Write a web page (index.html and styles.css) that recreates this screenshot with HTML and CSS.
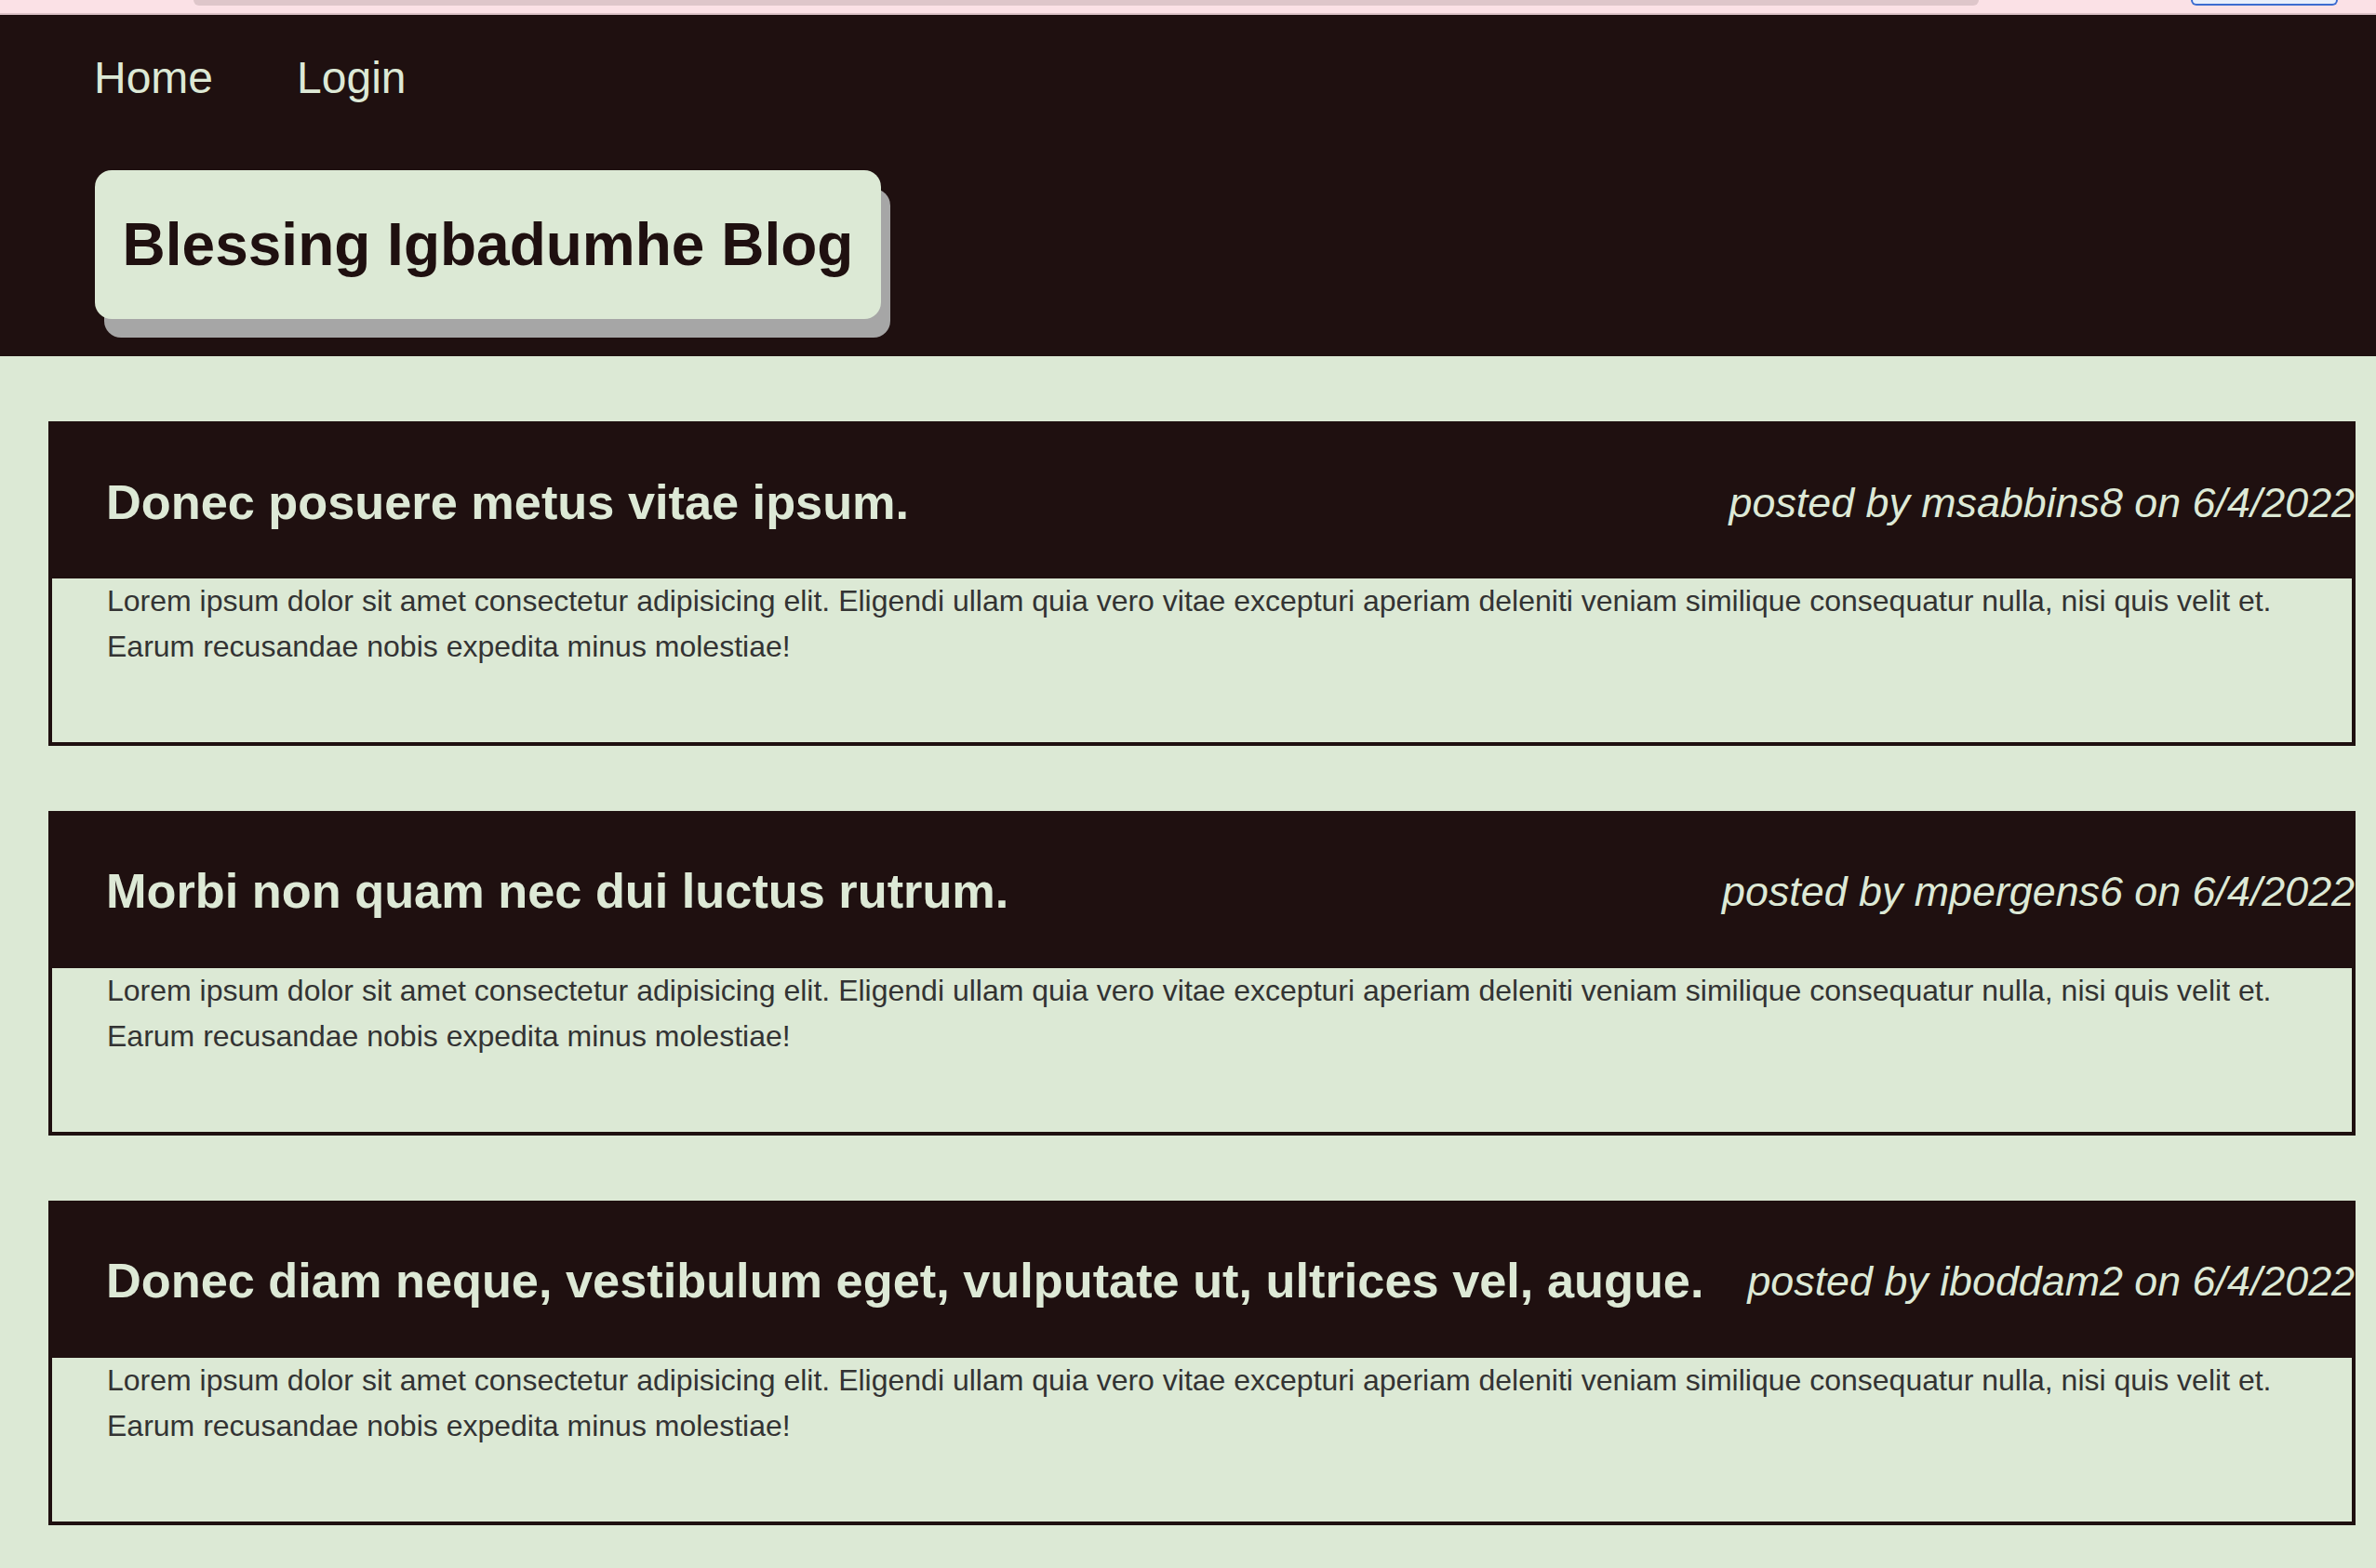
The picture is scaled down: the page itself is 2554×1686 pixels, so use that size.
FILE: index.html
```html
<!DOCTYPE html>
<html lang="en">
<head>
<meta charset="utf-8">
<title>Blessing Igbadumhe Blog</title>
<link rel="stylesheet" href="styles.css">
</head>
<body>
  <div class="chrome">
    <div class="chrome-bar"></div>
    <div class="chrome-btn"></div>
  </div>
  <header class="site-header">
    <nav class="nav">
      <a class="nav-link" href="#">Home</a>
      <a class="nav-link" href="#">Login</a>
    </nav>
    <div class="brand">
      <h1 class="brand-title">Blessing Igbadumhe Blog</h1>
    </div>
  </header>
  <main class="posts">
    <article class="post">
      <div class="post-head">
        <h2 class="post-title">Donec posuere metus vitae ipsum.</h2>
        <p class="post-meta">posted by msabbins8 on 6/4/2022</p>
      </div>
      <div class="post-body">
        <p class="post-text">Lorem ipsum dolor sit amet consectetur adipisicing elit. Eligendi ullam quia vero vitae excepturi aperiam deleniti veniam similique consequatur nulla, nisi quis velit et. Earum recusandae nobis expedita minus molestiae!</p>
      </div>
    </article>
    <article class="post">
      <div class="post-head">
        <h2 class="post-title">Morbi non quam nec dui luctus rutrum.</h2>
        <p class="post-meta">posted by mpergens6 on 6/4/2022</p>
      </div>
      <div class="post-body">
        <p class="post-text">Lorem ipsum dolor sit amet consectetur adipisicing elit. Eligendi ullam quia vero vitae excepturi aperiam deleniti veniam similique consequatur nulla, nisi quis velit et. Earum recusandae nobis expedita minus molestiae!</p>
      </div>
    </article>
    <article class="post">
      <div class="post-head">
        <h2 class="post-title">Donec diam neque, vestibulum eget, vulputate ut, ultrices vel, augue.</h2>
        <p class="post-meta">posted by iboddam2 on 6/4/2022</p>
      </div>
      <div class="post-body">
        <p class="post-text">Lorem ipsum dolor sit amet consectetur adipisicing elit. Eligendi ullam quia vero vitae excepturi aperiam deleniti veniam similique consequatur nulla, nisi quis velit et. Earum recusandae nobis expedita minus molestiae!</p>
      </div>
    </article>
  </main>
</body>
</html>
```

FILE: styles.css
```css
* {
  box-sizing: border-box;
}

html, body {
  margin: 0;
  padding: 0;
}

body {
  background: #dce9d5;
  font-family: "Liberation Sans", Arial, Helvetica, sans-serif;
  color: #333333;
  overflow: hidden;
}

/* browser chrome remnant at the very top */
.chrome {
  height: 16px;
  background: #fbe1e6;
  border-bottom: 2px solid #dcc3c8;
  display: flex;
  align-items: flex-start;
  padding-left: 208px;
}

.chrome-bar {
  width: 1919px;
  height: 6px;
  background: #dec6ca;
  border-radius: 0 0 8px 8px;
}

.chrome-btn {
  margin-left: 228px;
  width: 158px;
  height: 6px;
  background: #e8eefb;
  border: 2px solid #3a6cd0;
  border-top: none;
  border-radius: 0 0 14px 14px;
}

/* header */
.site-header {
  background: #1f1010;
  padding: 40px 0 40px 101px;
  display: flex;
  flex-direction: column;
  align-items: flex-start;
  gap: 71px;
}

.nav {
  display: flex;
  gap: 90px;
  height: 56px;
}

.nav-link {
  color: #dde9d6;
  text-decoration: none;
  font-size: 48px;
  line-height: 56px;
}

.brand {
  margin-left: 1px;
  height: 160px;
  width: 845px;
  background: #dce9d5;
  border-radius: 18px;
  box-shadow: 10px 20px 0 #a6a6a6;
  display: flex;
  align-items: center;
  justify-content: center;
}

.brand-title {
  margin: 0;
  font-size: 64px;
  line-height: 74px;
  font-weight: bold;
  color: #1f1010;
  white-space: nowrap;
}

/* posts */
.posts {
  padding: 70px 22px 40px 52px;
  display: flex;
  flex-direction: column;
  gap: 70px;
}

.post {
  border: 4px solid #1f1010;
  background: #dce9d5;
}

.post-head {
  background: #1f1010;
  height: 165px;
  display: flex;
  align-items: center;
  justify-content: space-between;
  gap: 38px;
  padding: 0 0 0 58px;
}

.post-title {
  margin: 0;
  font-size: 52.3px;
  line-height: 60px;
  font-weight: bold;
  color: #dde9d6;
  white-space: nowrap;
}

.post-meta {
  margin: 0 -3px 0 0;
  font-size: 44.8px;
  line-height: 52px;
  font-style: italic;
  color: #dde9d6;
  white-space: nowrap;
  flex-shrink: 0;
}

.post-body {
  padding: 0 59px 78.5px 59px;
}

.post-text {
  margin: 0;
  font-size: 32px;
  line-height: 48.7px;
  color: #333333;
}
```
